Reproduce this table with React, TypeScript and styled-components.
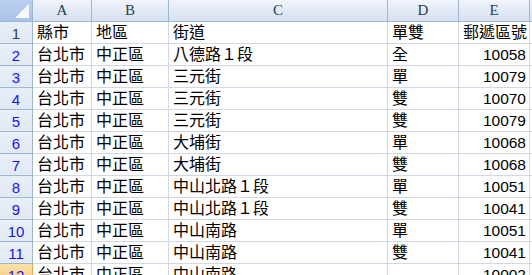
import React from 'react';
import styled, { createGlobalStyle, css } from 'styled-components';

const GlobalStyle = createGlobalStyle`
  html, body {
    margin: 0;
    padding: 0;
    background: #ffffff;
    overflow: hidden;
  }
`;

const COLS = ['A', 'B', 'C', 'D', 'E'];
const WIDTHS = [33, 59, 77, 219, 71, 71];

const rows: string[][] = [
  ['縣市', '地區', '街道', '單雙', '郵遞區號'],
  ['台北市', '中正區', '八德路１段', '全', '10058'],
  ['台北市', '中正區', '三元街', '單', '10079'],
  ['台北市', '中正區', '三元街', '雙', '10070'],
  ['台北市', '中正區', '三元街', '雙', '10079'],
  ['台北市', '中正區', '大埔街', '單', '10068'],
  ['台北市', '中正區', '大埔街', '雙', '10068'],
  ['台北市', '中正區', '中山北路１段', '單', '10051'],
  ['台北市', '中正區', '中山北路１段', '雙', '10041'],
  ['台北市', '中正區', '中山南路', '單', '10051'],
  ['台北市', '中正區', '中山南路', '雙', '10041'],
  ['台北市', '中正區', '中山南路', '', '10002'],
];

const Sheet = styled.div`
  display: grid;
  grid-template-columns: ${WIDTHS.map((w) => `${w}px`).join(' ')} 1fr;
  grid-auto-rows: 22px;
  width: 532px;
  height: 275px;
  overflow: hidden;
  font-family: 'Liberation Sans', 'Noto Sans CJK TC', sans-serif;
  font-size: 16px;
  color: #000;
`;

const headerBg = css`
  background: linear-gradient(#f1f5fb, #dfe8f5 60%, #d5e0f0);
  border-right: 1px solid #9eb6ce;
  border-bottom: 1px solid #9eb6ce;
  box-sizing: border-box;
`;

const Corner = styled.div`
  ${headerBg};
  position: relative;
  background: linear-gradient(#b9cfee, #a9c2e8);

  &::after {
    content: '';
    position: absolute;
    right: 3px;
    bottom: 3px;
    width: 0;
    height: 0;
    border-left: 14px solid transparent;
    border-bottom: 14px solid #ffffff;
    opacity: 0.9;
  }
`;

const ColHead = styled.div`
  ${headerBg};
  display: flex;
  align-items: center;
  justify-content: center;
  font-family: 'Liberation Serif', serif;
  font-size: 15px;
  color: #2b3d55;
`;

const RowHead = styled.div<{ $filtered: boolean; $active: boolean }>`
  ${headerBg};
  background: ${(p) =>
    p.$active ? 'linear-gradient(#fbe1a8, #f8c77a)' : 'linear-gradient(#e9eff8, #e1e9f5)'};
  border-right-color: ${(p) => (p.$active ? '#f2a94e' : '#9eb6ce')};
  display: flex;
  align-items: flex-end;
  justify-content: center;
  padding-bottom: 1px;
  font-family: 'Liberation Sans', sans-serif;
  font-size: 15px;
  color: ${(p) => (p.$filtered ? '#1414f0' : '#2b3d55')};
`;

const Cell = styled.div<{ $num?: boolean }>`
  box-sizing: border-box;
  border-right: 1px solid #d0d7e5;
  border-bottom: 1px solid #d0d7e5;
  display: flex;
  align-items: flex-end;
  justify-content: ${(p) => (p.$num ? 'flex-end' : 'flex-start')};
  padding: 0 3px 0 4px;
  white-space: nowrap;
  overflow: hidden;
  line-height: 20px;
  font-size: ${(p) => (p.$num ? '15.5px' : '16px')};
`;

export default function App() {
  return (
    <>
      <GlobalStyle />
      <Sheet>
        <Corner />
        {COLS.map((c) => (
          <ColHead key={c}>{c}</ColHead>
        ))}
        <ColHead />
        {rows.map((r, i) => (
          <React.Fragment key={i}>
            <RowHead $filtered={i > 0} $active={i === 11}>
              {i + 1}
            </RowHead>
            {r.map((v, j) => (
              <Cell key={j} $num={j === 4 && i > 0}>
                {v}
              </Cell>
            ))}
            <Cell />
          </React.Fragment>
        ))}
      </Sheet>
    </>
  );
}
